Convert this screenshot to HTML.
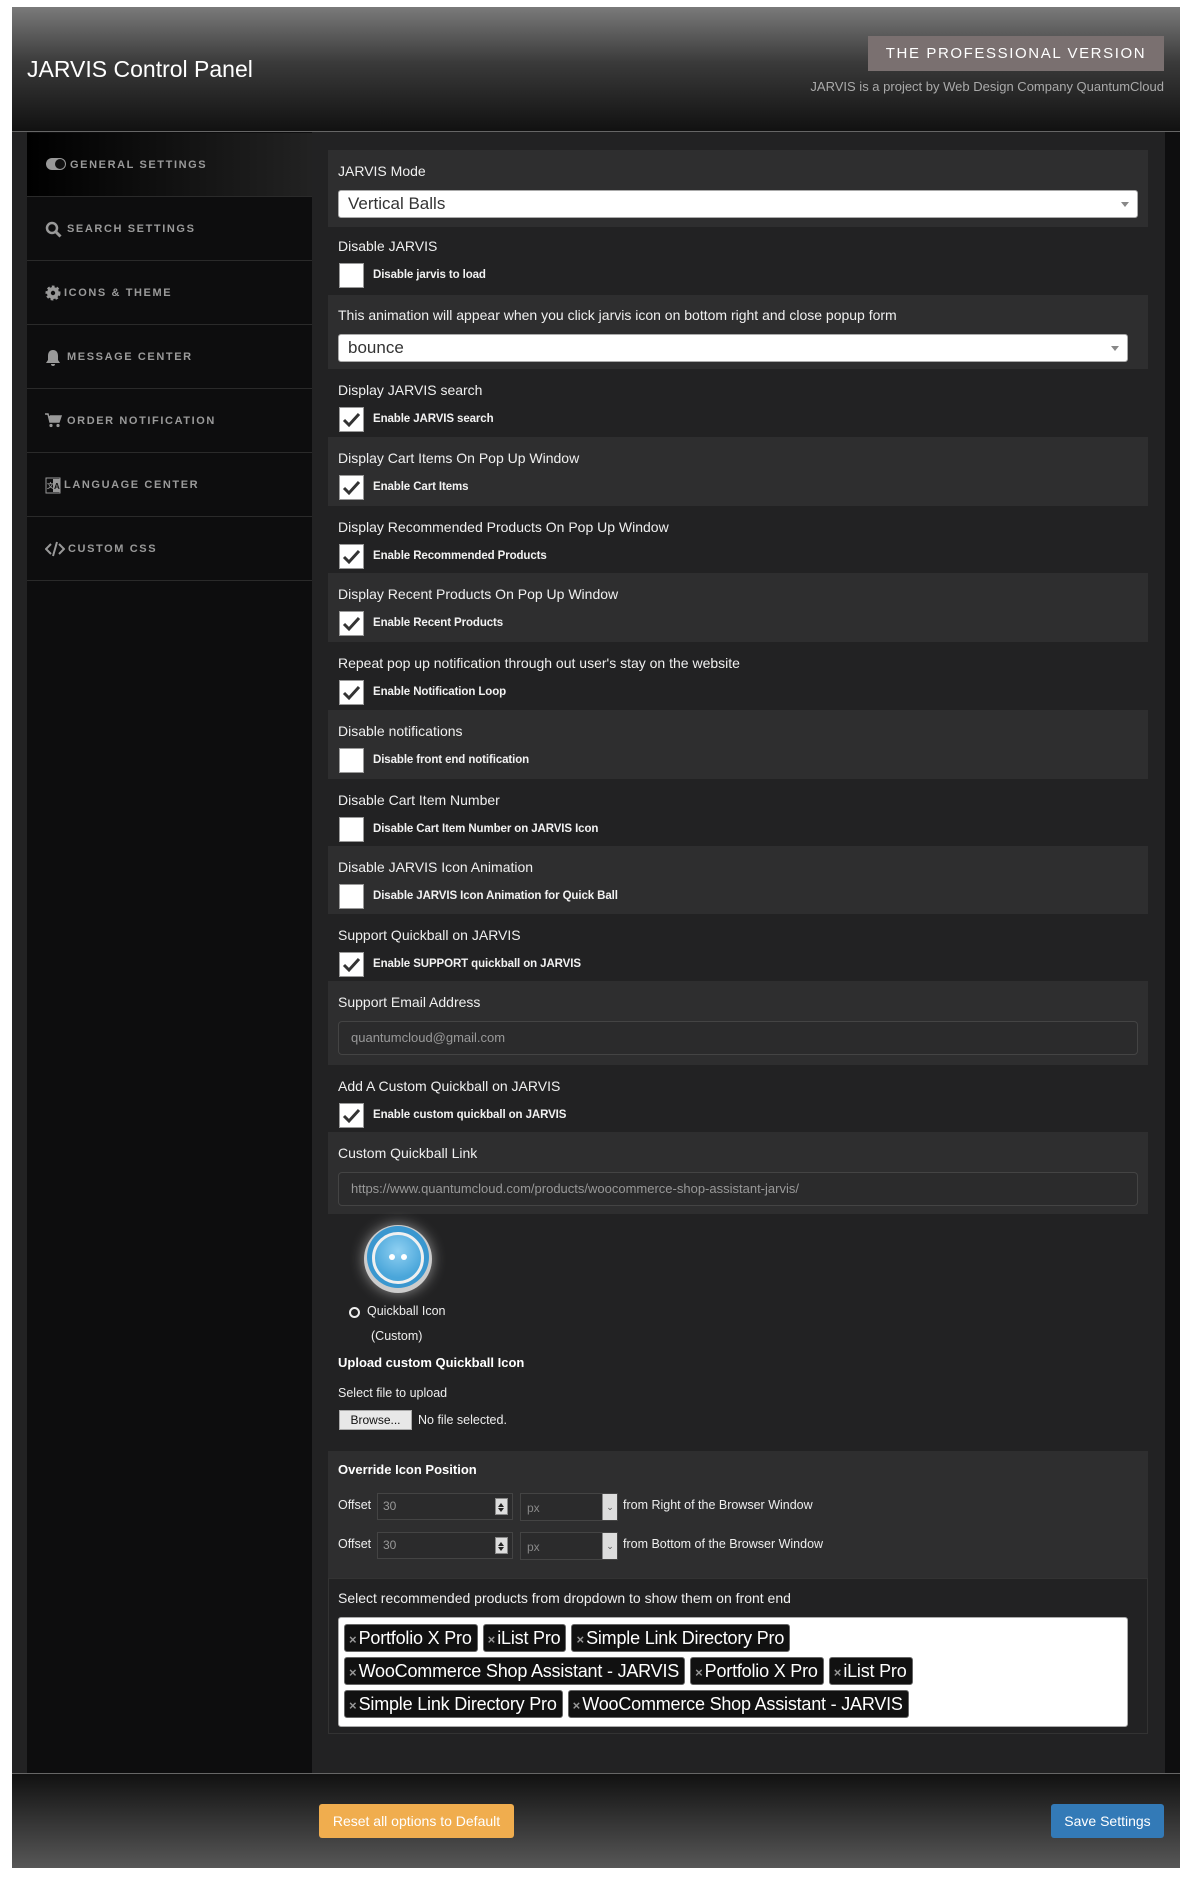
<!DOCTYPE html>
<html><head><meta charset="utf-8"><style>
*{box-sizing:border-box;margin:0;padding:0}
body{width:1198px;height:1893px;background:#fff;position:relative;font-family:"Liberation Sans",Arial,sans-serif;overflow:hidden}
.a{position:absolute}
.hdr{left:12px;top:7px;width:1168px;height:125px;background:linear-gradient(#7a7a7a,#3a3a3a 45%,#111);border-bottom:1px solid #666}
.body{left:12px;top:132px;width:1168px;height:1641px;background:#222223}
.side{left:27px;top:132px;width:285px;height:1641px;background:#0d0d0e}
.strip{left:1165px;top:132px;width:15px;height:1641px;background:#0e0e0f}
.item{position:absolute;left:27px;width:285px;height:64px;border-bottom:1px solid #2a2a2a;color:#9a9a9a;font-size:11px;font-weight:bold;letter-spacing:1.6px;line-height:64px}
.item svg{position:absolute;left:18px;top:24px}
.item span{position:absolute;left:43px}
.row{position:absolute;left:328px;width:820px}
.L{background:#2e2e2f}.D{background:#222223}
.lab{position:absolute;left:10px;color:#f0f0f0;font-size:14px;line-height:18px}
.cb{position:absolute;left:11px;width:25px;height:25px;background:#fff;border:1px solid #999}
.cbt{position:absolute;left:45px;color:#f2f2f2;font-size:11.5px;font-weight:bold;line-height:25px;letter-spacing:-0.1px}
.sel{position:absolute;background:#fff;border:1px solid #aaa;border-radius:3px;color:#333;font-size:17px;padding-left:9px;line-height:25px}
.sel:after{content:"";position:absolute;right:8px;top:11px;border:4px solid transparent;border-top:5px solid #888}
.inp{position:absolute;left:10px;width:800px;height:34px;border:1px solid #444;border-radius:4px;background:#2b2b2c;color:#999;font-size:13px;line-height:32px;padding-left:12px}
.tag{display:inline-block;background:#111;border:1px solid #666;border-radius:3px;color:#fff;font-size:18px;height:28px;line-height:26px;padding:0 5px 0 4px;margin:0 5px 5px 0;letter-spacing:-0.2px}
.tag b{color:#999;font-size:13px;font-weight:bold;margin-right:2px;letter-spacing:0}
.w{color:#eee;font-size:13px}
.spin{position:absolute;right:4px;top:4px;width:13px;height:17px;background:#ddd;border:1px solid #888}
.spin:before{content:"";position:absolute;left:2px;top:1px;border:3.5px solid transparent;border-bottom:4px solid #222}
.spin:after{content:"";position:absolute;left:2px;top:9px;border:3.5px solid transparent;border-top:4px solid #222}
</style></head><body>
<div class="a hdr"></div>
<div class="a" style="left:27px;top:55px;color:#fff;font-size:23px;line-height:28px">JARVIS Control Panel</div>
<div class="a" style="left:868px;top:36px;width:296px;height:35px;background:#7a7070;color:#fff;font-size:15px;letter-spacing:1.6px;text-align:center;line-height:35px">THE PROFESSIONAL VERSION</div>
<div class="a" style="right:34px;top:79px;color:#aaa;font-size:13px">JARVIS is a project by Web Design Company QuantumCloud</div>
<div class="a body"></div>
<div class="a side"></div>
<div class="a strip"></div>
<div class="item" style="top:133px;background:linear-gradient(90deg,#000,#222)"><svg width="22" height="14" viewBox="0 0 22 14"><rect x="1" y="1" width="20" height="12" rx="6" fill="#999"/><circle cx="15" cy="7" r="5" fill="#111"/></svg><span style="left:43px">GENERAL SETTINGS</span></div>
<div class="item" style="top:197px"><svg width="18" height="18" viewBox="0 0 18 18"><circle cx="7" cy="7" r="5" fill="none" stroke="#999" stroke-width="2.5"/><path d="M10.5 10.5l5 5" stroke="#999" stroke-width="3"/></svg><span style="left:40px">SEARCH SETTINGS</span></div>
<div class="item" style="top:261px"><svg width="16" height="16" viewBox="0 0 16 16"><circle cx="8" cy="8" r="6" fill="#999" stroke="#999" stroke-width="3" stroke-dasharray="2.5 2"/><circle cx="8" cy="8" r="2.2" fill="#0d0d0e"/></svg><span style="left:37px">ICONS &amp; THEME</span></div>
<div class="item" style="top:325px"><svg width="16" height="18" viewBox="0 0 16 18"><path d="M8 1c-3 0-5 2-5 6v4l-2 3h14l-2-3V7c0-4-2-6-5-6zM6 15a2 2 0 004 0z" fill="#999"/></svg><span style="left:40px">MESSAGE CENTER</span></div>
<div class="item" style="top:389px"><svg width="17" height="15" viewBox="0 0 17 15"><path d="M0 1h3l2 8h9l2-6H5" fill="#999" stroke="#999" stroke-width="1.5"/><circle cx="6" cy="12.5" r="1.6" fill="#999"/><circle cx="13" cy="12.5" r="1.6" fill="#999"/></svg><span style="left:40px">ORDER NOTIFICATION</span></div>
<div class="item" style="top:453px"><svg width="16" height="18" viewBox="0 0 16 18"><rect x="1" y="1" width="14" height="15" fill="none" stroke="#999"/><rect x="8" y="2" width="7" height="13" fill="#999"/><text x="2" y="11" font-size="7" fill="#999">文</text><text x="9" y="12" font-size="8" fill="#111" font-weight="bold">A</text></svg><span style="left:37px">LANGUAGE CENTER</span></div>
<div class="item" style="top:517px"><svg width="20" height="16" viewBox="0 0 20 16"><path d="M6 3L1 8l5 5M14 3l5 5-5 5M12 1L8 15" fill="none" stroke="#999" stroke-width="2"/></svg><span style="left:41px">CUSTOM CSS</span></div>

<div class="row L" style="top:150px;height:77px"><div class="lab" style="top:12px">JARVIS Mode</div><div class="sel" style="left:10px;top:40px;width:800px;height:28px">Vertical Balls</div></div>
<div class="row D" style="top:227px;height:68px"><div class="lab" style="top:10px">Disable JARVIS</div><div class="cb" style="top:36px"></div><div class="cbt" style="top:36px">Disable jarvis to load</div></div>
<div class="row L" style="top:295px;height:74px"><div class="lab" style="top:11px">This animation will appear when you click jarvis icon on bottom right and close popup form</div><div class="sel" style="left:10px;top:39px;width:790px;height:28px">bounce</div></div>

<div class="row D" style="top:369px;height:68px"><div class="lab" style="top:12px">Display JARVIS search</div><div class="cb" style="top:38px"><svg width="23" height="23"><path d="M4 12l5 5 10-11" fill="none" stroke="#333" stroke-width="3"/></svg></div><div class="cbt" style="top:38px">Enable JARVIS search</div></div>
<div class="row L" style="top:437px;height:69px"><div class="lab" style="top:12px">Display Cart Items On Pop Up Window</div><div class="cb" style="top:38px"><svg width="23" height="23"><path d="M4 12l5 5 10-11" fill="none" stroke="#333" stroke-width="3"/></svg></div><div class="cbt" style="top:38px">Enable Cart Items</div></div>
<div class="row D" style="top:506px;height:67px"><div class="lab" style="top:12px">Display Recommended Products On Pop Up Window</div><div class="cb" style="top:38px"><svg width="23" height="23"><path d="M4 12l5 5 10-11" fill="none" stroke="#333" stroke-width="3"/></svg></div><div class="cbt" style="top:38px">Enable Recommended Products</div></div>
<div class="row L" style="top:573px;height:69px"><div class="lab" style="top:12px">Display Recent Products On Pop Up Window</div><div class="cb" style="top:38px"><svg width="23" height="23"><path d="M4 12l5 5 10-11" fill="none" stroke="#333" stroke-width="3"/></svg></div><div class="cbt" style="top:38px">Enable Recent Products</div></div>
<div class="row D" style="top:642px;height:68px"><div class="lab" style="top:12px">Repeat pop up notification through out user's stay on the website</div><div class="cb" style="top:38px"><svg width="23" height="23"><path d="M4 12l5 5 10-11" fill="none" stroke="#333" stroke-width="3"/></svg></div><div class="cbt" style="top:38px">Enable Notification Loop</div></div>
<div class="row L" style="top:710px;height:69px"><div class="lab" style="top:12px">Disable notifications</div><div class="cb" style="top:38px"></div><div class="cbt" style="top:38px">Disable front end notification</div></div>
<div class="row D" style="top:779px;height:67px"><div class="lab" style="top:12px">Disable Cart Item Number</div><div class="cb" style="top:38px"></div><div class="cbt" style="top:38px">Disable Cart Item Number on JARVIS Icon</div></div>
<div class="row L" style="top:846px;height:68px"><div class="lab" style="top:12px">Disable JARVIS Icon Animation</div><div class="cb" style="top:38px"></div><div class="cbt" style="top:38px">Disable JARVIS Icon Animation for Quick Ball</div></div>
<div class="row D" style="top:914px;height:67px"><div class="lab" style="top:12px">Support Quickball on JARVIS</div><div class="cb" style="top:38px"><svg width="23" height="23"><path d="M4 12l5 5 10-11" fill="none" stroke="#333" stroke-width="3"/></svg></div><div class="cbt" style="top:38px">Enable SUPPORT quickball on JARVIS</div></div>
<div class="row L" style="top:981px;height:84px"><div class="lab" style="top:12px">Support Email Address</div><div class="inp" style="top:40px">quantumcloud@gmail.com</div></div>
<div class="row D" style="top:1065px;height:67px"><div class="lab" style="top:12px">Add A Custom Quickball on JARVIS</div><div class="cb" style="top:38px"><svg width="23" height="23"><path d="M4 12l5 5 10-11" fill="none" stroke="#333" stroke-width="3"/></svg></div><div class="cbt" style="top:38px">Enable custom quickball on JARVIS</div></div>
<div class="row L" style="top:1132px;height:82px"><div class="lab" style="top:12px">Custom Quickball Link</div><div class="inp" style="top:40px">https://www.quantumcloud.com/products/woocommerce-shop-assistant-jarvis/</div></div>
<div class="row D" style="top:1214px;height:237px"></div>
<div class="a" style="left:364px;top:1225px;width:68px;height:68px;border-radius:50%;background:#ccc;box-shadow:0 0 14px rgba(255,255,255,.5)"></div>
<div class="a" style="left:367px;top:1226px;width:62px;height:62px;border-radius:50%;background:#3a97cf"></div>
<div class="a" style="left:372px;top:1232px;width:52px;height:52px;border-radius:50%;border:3px solid #f0f0f0;background:radial-gradient(circle at 50% 35%,#8fd0f2,#4aa6da 70%)"></div>
<div class="a" style="left:389px;top:1254px;width:6px;height:6px;border-radius:50%;background:#fff"></div>
<div class="a" style="left:401px;top:1254px;width:6px;height:6px;border-radius:50%;background:#fff"></div>
<div class="a" style="left:349px;top:1307px;width:11px;height:11px;border-radius:50%;border:2.5px solid #eee"></div>
<div class="a w" style="left:367px;top:1304px;font-size:12.5px">Quickball Icon</div>
<div class="a w" style="left:371px;top:1329px;font-size:12.5px">(Custom)</div>
<div class="a" style="left:338px;top:1355px;color:#fff;font-size:13px;font-weight:bold">Upload custom Quickball Icon</div>
<div class="a w" style="left:338px;top:1386px;font-size:12.5px">Select file to upload</div>
<div class="a" style="left:339px;top:1410px;width:73px;height:20px;background:#e8e8e8;border:1px solid #aaa;font-size:12px;color:#111;text-align:center;line-height:18px">Browse...</div>
<div class="a w" style="left:418px;top:1413px;font-size:12.5px">No file selected.</div>

<div class="row L" style="top:1451px;height:127px"></div>
<div class="a" style="left:338px;top:1462px;color:#fff;font-size:13px;font-weight:bold">Override Icon Position</div>
<div class="a w" style="left:338px;top:1498px;font-size:12.5px">Offset</div>
<div class="a" style="left:377px;top:1493px;width:136px;height:27px;border:1px solid #444;background:#2b2b2c;color:#999;font-size:12px;line-height:25px;padding-left:5px">30<div class="spin"></div></div>
<div class="a" style="left:520px;top:1493px;width:98px;height:28px;border:1px solid #444;background:#2b2b2c;color:#888;font-size:12px;line-height:28px;padding-left:6px">px<div class="a" style="right:0;top:0;width:15px;height:26px;background:#ddd;border-left:1px solid #888;color:#555;font-size:9px;text-align:center;line-height:26px">⌄</div></div>
<div class="a w" style="left:623px;top:1498px;font-size:12.5px">from Right of the Browser Window</div>
<div class="a w" style="left:338px;top:1537px;font-size:12.5px">Offset</div>
<div class="a" style="left:377px;top:1532px;width:136px;height:27px;border:1px solid #444;background:#2b2b2c;color:#999;font-size:12px;line-height:25px;padding-left:5px">30<div class="spin"></div></div>
<div class="a" style="left:520px;top:1532px;width:98px;height:28px;border:1px solid #444;background:#2b2b2c;color:#888;font-size:12px;line-height:28px;padding-left:6px">px<div class="a" style="right:0;top:0;width:15px;height:26px;background:#ddd;border-left:1px solid #888;color:#555;font-size:9px;text-align:center;line-height:26px">⌄</div></div>
<div class="a w" style="left:623px;top:1537px;font-size:12.5px">from Bottom of the Browser Window</div>

<div class="row D" style="top:1578px;height:156px;border:1px solid #333"><div class="lab" style="top:10px;left:9px">Select recommended products from dropdown to show them on front end</div></div>
<div class="a" style="left:338px;top:1617px;width:790px;height:110px;background:#fff;border:1px solid #aaa;border-radius:3px;padding:6px 0 0 5px">
<span class="tag"><b>×</b>Portfolio X Pro</span><span class="tag"><b>×</b>iList Pro</span><span class="tag"><b>×</b>Simple Link Directory Pro</span><br>
<span class="tag"><b>×</b>WooCommerce Shop Assistant - JARVIS</span><span class="tag"><b>×</b>Portfolio X Pro</span><span class="tag"><b>×</b>iList Pro</span><br>
<span class="tag"><b>×</b>Simple Link Directory Pro</span><span class="tag"><b>×</b>WooCommerce Shop Assistant - JARVIS</span>
</div>

<div class="a" style="left:12px;top:1773px;width:1168px;height:95px;background:linear-gradient(#111,#575757);border-top:1px solid #666"></div>
<div class="a" style="left:319px;top:1804px;width:195px;height:34px;background:#f0ad4e;border-radius:3px;color:#fff;font-size:14px;line-height:34px;text-align:center">Reset all options to Default</div>
<div class="a" style="left:1051px;top:1804px;width:113px;height:34px;background:#337ab7;border-radius:3px;color:#fff;font-size:14px;line-height:34px;text-align:center">Save Settings</div>
</body></html>
